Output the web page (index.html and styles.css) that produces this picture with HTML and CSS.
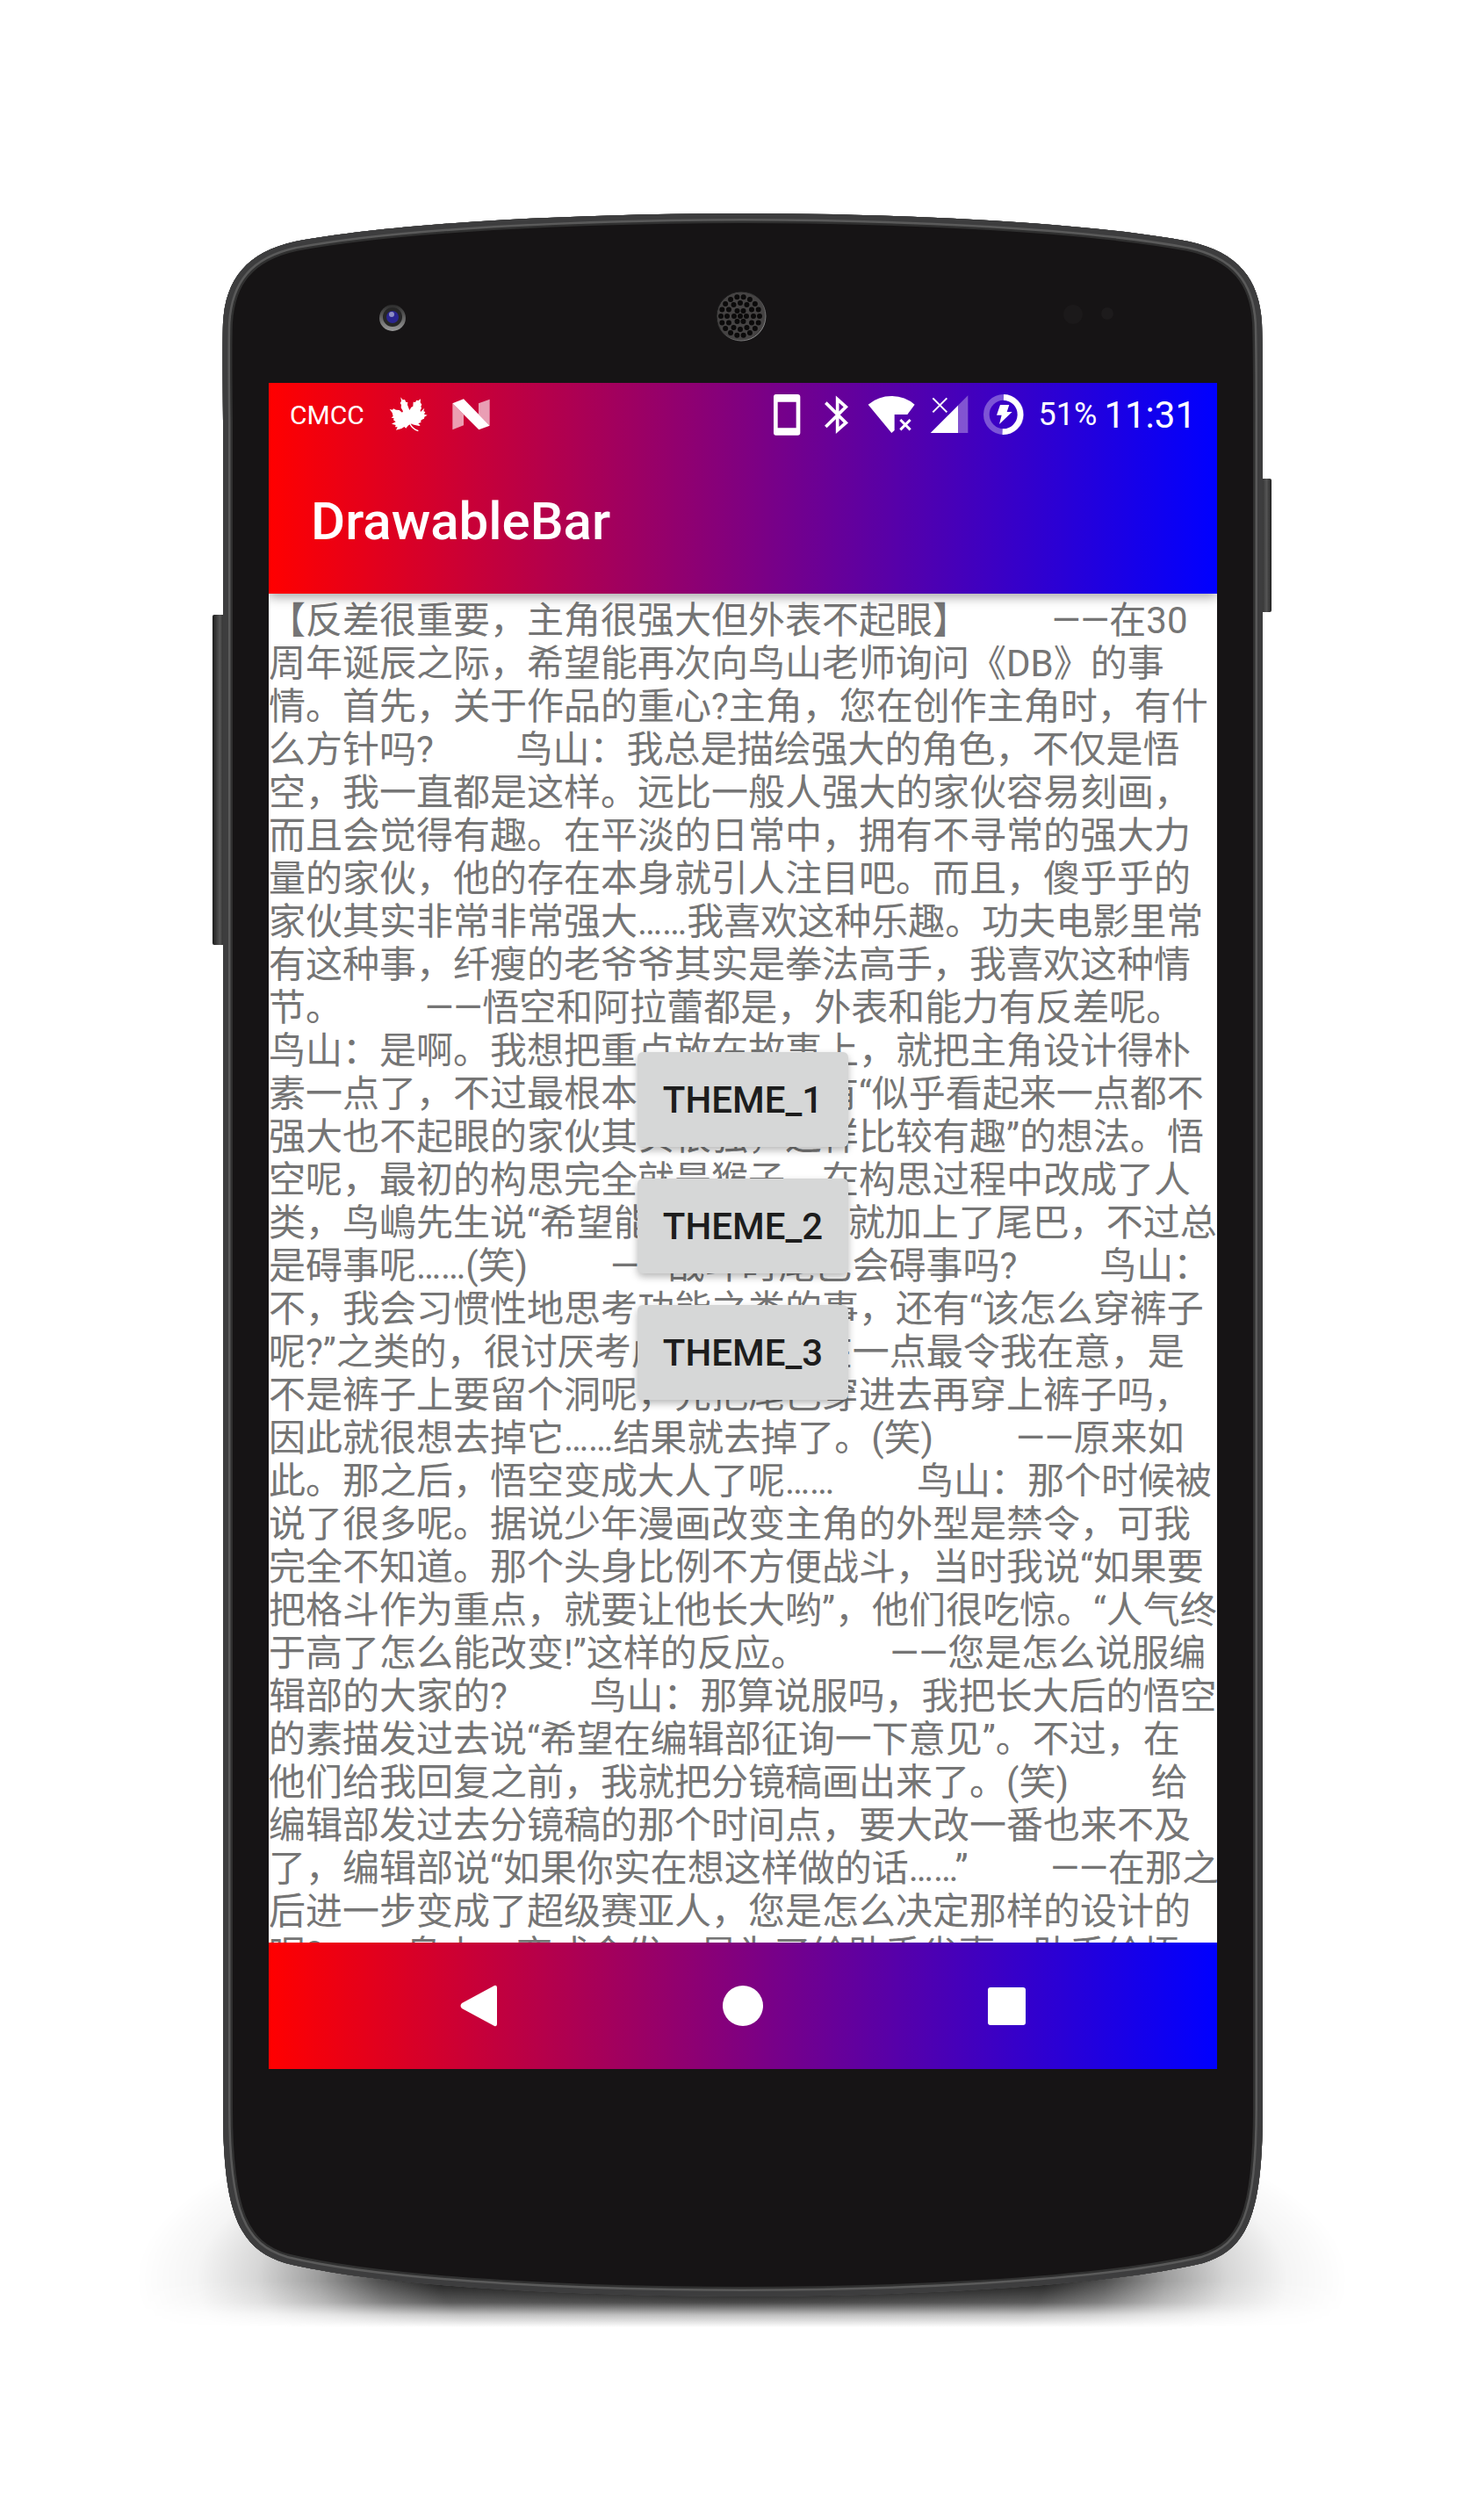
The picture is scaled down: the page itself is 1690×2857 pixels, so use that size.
FILE: index.html
```html
<!DOCTYPE html>
<html lang="zh-CN">
<head>
<meta charset="utf-8">
<meta name="viewport" content="width=device-width, initial-scale=1">
<title>DrawableBar</title>
<link rel="stylesheet" href="styles.css">
</head>
<body>
<main class="stage">
  <div class="device">
    <svg class="shell" viewBox="252 242 1186 2374" preserveAspectRatio="none" aria-hidden="true">
      <defs>
        <radialGradient id="glow">
          <stop offset="0" stop-color="#000"/>
          <stop offset=".5" stop-color="#000" stop-opacity=".88"/>
          <stop offset=".6" stop-color="#000" stop-opacity=".68"/>
          <stop offset=".7" stop-color="#000" stop-opacity=".38"/>
          <stop offset=".8" stop-color="#000" stop-opacity=".16"/>
          <stop offset=".9" stop-color="#000" stop-opacity=".04"/>
          <stop offset="1" stop-color="#000" stop-opacity="0"/>
        </radialGradient>
        <linearGradient id="fade" x1="0" y1="2300" x2="0" y2="2650" gradientUnits="userSpaceOnUse">
          <stop offset="0" stop-color="#fff"/>
          <stop offset=".85" stop-color="#fff"/>
          <stop offset=".92" stop-color="#bbb"/>
          <stop offset=".96" stop-color="#444"/>
          <stop offset="1" stop-color="#000"/>
        </linearGradient>
        <mask id="ground" maskUnits="userSpaceOnUse" x="100" y="2250" width="1500" height="400">
          <rect x="100" y="2250" width="1500" height="400" fill="url(#fade)"/>
        </mask>
        <linearGradient id="key">
          <stop offset="0" stop-color="#1c1c1c"/>
          <stop offset=".6" stop-color="#555"/>
          <stop offset="1" stop-color="#222"/>
        </linearGradient>
        <linearGradient id="lens" x1="0" y1="0" x2="0" y2="1">
          <stop offset="0" stop-color="#2b2b2b"/>
          <stop offset="1" stop-color="#9a9a9a"/>
        </linearGradient>
        <linearGradient id="rim" x1="0" y1="0" x2="1" y2="1">
          <stop offset=".3" stop-color="#1a1a1a"/>
          <stop offset="1" stop-color="#aaa"/>
        </linearGradient>
        <path id="body" d="M845 243C1000 243 1225 251 1354 275C1410 287 1434 318 1437 367Q1438 390 1438 480V2400C1438 2520 1422 2561 1370 2577C1240 2607 1000 2615 845 2615C690 2615 450 2607 325 2577C272 2561 254 2520 254 2400V480Q253 390 254 367C257 318 281 287 336 275C465 251 690 243 845 243Z"/>
        <clipPath id="bodyClip"><use href="#body"/></clipPath>
      </defs>
      <ellipse cx="845" cy="2595" rx="690" ry="230" fill="url(#glow)" mask="url(#ground)"/>
      <rect x="242" y="700" width="14" height="376" rx="2" fill="url(#key)"/>
      <rect x="1434" y="545" width="14" height="152" rx="2" fill="url(#key)"/>
      <use href="#body" fill="#161415"/>
      <g clip-path="url(#bodyClip)" fill="none">
        <use href="#body" stroke="#303030" stroke-width="22"/>
        <use href="#body" stroke="#5a5a5a" stroke-width="17"/>
        <use href="#body" stroke="#3d3d3e" stroke-width="12"/>
      </g>
      <circle cx="447" cy="362" r="15" fill="url(#lens)"/>
      <circle cx="447" cy="361" r="11" fill="#262626"/>
      <circle cx="447" cy="361" r="7" fill="#2a2590"/>
      <circle cx="446" cy="358" r="3" fill="#8e8ec4"/>
      <circle cx="844" cy="360" r="28" fill="#454343" stroke="url(#rim)" stroke-width="1"/>
      <g fill="none" stroke="#0b0a0a" stroke-width="6" stroke-linecap="round">
        <path d="M843 360h0"/>
        <circle cx="843" cy="360" r="7" pathLength="6" stroke-dasharray="0 1"/>
        <circle cx="843" cy="360" r="15" pathLength="12" stroke-dasharray="0 1"/>
        <circle cx="843" cy="360" r="22" pathLength="18" stroke-dasharray="0 1"/>
      </g>
      <circle cx="1222" cy="358" r="11" fill="#1b191a"/>
      <circle cx="1261" cy="357" r="7" fill="#1d1b1c"/>
    </svg>

    <section class="screen">
      <header class="top">
        <div class="status">
          <div class="status-left">
            <span class="carrier">CMCC</span>
            <svg width="44" height="40" viewBox="51 395 132 120" aria-hidden="true"><path fill="#fff" d="M91 396L98 405L105 404L109 413L115 413L114 422L121 440L127 430L133 427L134 412L141 413L145 406L151 408L159 402L158 414L163 421L160 427L162 433L158 441L159 446L172 433L169 444L175 446L171 454L182 457L172 463L171 469L164 472L159 477L161 481L151 486L158 492L154 494L140 491L124 487L116 493L109 502L103 497L94 503L75 508L80 498L72 498L74 491L60 487L74 480L66 474L68 468L59 466L65 461L62 449L53 437L63 439L66 435L75 439L86 440L96 448L99 444L92 432L93 422L89 416L93 409Z"/><path d="M122 486q9 18 29 25" fill="none" stroke="#fff" stroke-width="4"/><path d="M128 486q9 13 24 19" fill="none" stroke="#d40028" stroke-width="2"/></svg>
            <svg width="43" height="36" viewBox="269 402 129 108" aria-hidden="true"><path fill="#fff" fill-opacity=".62" d="M270 418l38 38v37l-38 15zM359 418l38-14v90l-38-38z"/><path fill="#fff" d="M270 418l38-15 89 91-37 14z"/></svg>
          </div>
          <div class="status-right">
            <svg width="46" height="48" viewBox="10 24 138 144" aria-hidden="true"><path fill="#fff" fill-rule="evenodd" d="M42 27h74q9 0 9 9v122q0 9-9 9H42q-8 0-8-9V36q0-9 8-9zm6 26v89h63V53z"/></svg>
            <svg width="36" height="48" viewBox="196 24 108 144" aria-hidden="true"><path fill="none" stroke="#fff" stroke-width="11" d="M212 56l69 68-29 26V44l29 26-69 68"/></svg>
            <svg width="56" height="48" viewBox="352 24 168 144" aria-hidden="true"><path fill="#fff" d="M357 62q35-29 80-29t79 29l-25 34h-44v54l-10 9z"/><path fill="none" stroke="#fff" stroke-width="9" d="M467 114l34 34M501 114l-34 34"/></svg>
            <svg width="44" height="48" viewBox="566 24 132 144" aria-hidden="true"><path fill="#fff" fill-opacity=".33" d="M696 31v128h-35V66z"/><path fill="#fff" d="M662 65v94h-94z"/><path fill="none" stroke="#fff" stroke-width="6" d="M576 40l48 48M624 40l-48 48"/></svg>
            <svg width="48" height="48" viewBox="744 24 144 144" aria-hidden="true"><circle cx="816" cy="96" r="59" fill="none" stroke="#fff" stroke-opacity=".33" stroke-width="20"/><path fill="none" stroke="#fff" stroke-width="20" d="M816 37a59 59 0 1 1-4 118"/><path fill="#fff" d="M804 63h31l-8 24h18l-44 42 8-31h-17z"/></svg>
            <div class="readout"><span class="percent">51%</span><span class="clock">11:31</span></div>
          </div>
        </div>
        <h1 class="title">DrawableBar</h1>
      </header>

      <article class="article">【反差很重要，主角很强大但外表不起眼】         ——在30
周年诞辰之际，希望能再次向鸟山老师询问《DB》的事
情。首先，关于作品的重心?主角，您在创作主角时，有什
么方针吗?         鸟山：我总是描绘强大的角色，不仅是悟
空，我一直都是这样。远比一般人强大的家伙容易刻画，
而且会觉得有趣。在平淡的日常中，拥有不寻常的强大力
量的家伙，他的存在本身就引人注目吧。而且，傻乎乎的
家伙其实非常非常强大……我喜欢这种乐趣。功夫电影里常
有这种事，纤瘦的老爷爷其实是拳法高手，我喜欢这种情
节。         ——悟空和阿拉蕾都是，外表和能力有反差呢。
鸟山：是啊。我想把重点放在故事上，就把主角设计得朴
素一点了，不过最根本的还是因为有“似乎看起来一点都不
强大也不起眼的家伙其实很强，这样比较有趣”的想法。悟
空呢，最初的构思完全就是猴子，在构思过程中改成了人
类，鸟嶋先生说“希望能有些特征”，就加上了尾巴，不过总
是碍事呢……(笑)         ——战斗时尾巴会碍事吗?         鸟山：
不，我会习惯性地思考功能之类的事，还有“该怎么穿裤子
呢?”之类的，很讨厌考虑。特别是在一点最令我在意，是
不是裤子上要留个洞呢，先把尾巴穿进去再穿上裤子吗，
因此就很想去掉它……结果就去掉了。(笑)         ——原来如
此。那之后，悟空变成大人了呢……         鸟山：那个时候被
说了很多呢。据说少年漫画改变主角的外型是禁令，可我
完全不知道。那个头身比例不方便战斗，当时我说“如果要
把格斗作为重点，就要让他长大哟”，他们很吃惊。“人气终
于高了怎么能改变!”这样的反应。         ——您是怎么说服编
辑部的大家的?         鸟山：那算说服吗，我把长大后的悟空
的素描发过去说“希望在编辑部征询一下意见”。不过，在
他们给我回复之前，我就把分镜稿画出来了。(笑)         给
编辑部发过去分镜稿的那个时间点，要大改一番也来不及
了，编辑部说“如果你实在想这样做的话……”         ——在那之
后进一步变成了超级赛亚人，您是怎么决定那样的设计的
呢?         鸟山：变成金发，是为了给助手省事，助手给悟</article>

      <nav class="navbar" aria-label="System">
        <button class="nav-key" type="button" aria-label="Back"><svg width="48" height="48" viewBox="0 0 48 48"><path fill="#fff" d="M41 1q3-1 3 3v40q0 4-3 3L4 27q-3-3 0-6z"/></svg></button>
        <button class="nav-key" type="button" aria-label="Home"><svg width="48" height="48" viewBox="0 0 48 48"><circle cx="24" cy="24" r="23" fill="#fff"/></svg></button>
        <button class="nav-key" type="button" aria-label="Overview"><svg width="48" height="48" viewBox="0 0 48 48"><rect x="3" y="3" width="43" height="43" rx="3" fill="#fff"/></svg></button>
      </nav>

      <div class="themes">
        <button class="theme" type="button">THEME_1</button>
        <button class="theme" type="button">THEME_2</button>
        <button class="theme" type="button">THEME_3</button>
      </div>
    </section>
  </div>
</main>
</body>
</html>
```
FILE: styles.css
```css
* {
  box-sizing: border-box;
}

body {
  margin: 0;
  background: #fff;
  font-family: Roboto, "Noto Sans CJK SC", sans-serif;
}

.stage {
  padding: 242px 16px;
  overflow: hidden;
}

.device {
  position: relative;
  max-width: 1186px;
  margin: 0 auto;
  padding: 194px 52px 260px 54px;
}

.shell {
  position: absolute;
  inset: 0;
  width: 100%;
  height: 100%;
  overflow: visible;
}

.screen {
  position: relative;
  display: flex;
  flex-direction: column;
  aspect-ratio: 9 / 16;
  overflow: hidden;
  background: #fff;
}

.top,
.navbar {
  flex: none;
  background: linear-gradient(90deg, #f00, #800080, #00f);
  color: #fff;
}

.top {
  position: relative;
  z-index: 1;
  box-shadow: 0 4px 12px rgba(0, 0, 0, 0.35);
}

.status,
.status-left,
.status-right,
.readout {
  display: flex;
  align-items: center;
}

.status {
  justify-content: space-between;
  height: 72px;
  padding: 0 24px;
}

.status-left {
  gap: 28px;
}

.status-right {
  gap: 16px;
}

.readout {
  gap: 8px;
}

.carrier {
  font-size: 30px;
}

.percent {
  font-size: 36px;
}

.clock {
  font-size: 42px;
}

.title {
  margin: 0;
  padding: 4px 48px 0;
  font-size: 60px;
  font-weight: 500;
  line-height: 164px;
}

.article {
  flex: 1;
  min-height: 0;
  padding-top: 6px;
  overflow: hidden;
  color: #757575;
  font-size: 42px;
  line-height: 49px;
  white-space: pre;
}

.navbar {
  display: flex;
  justify-content: center;
  height: 144px;
}

.nav-key {
  display: grid;
  flex: 0 1 300px;
  place-items: center;
  padding: 0;
  border: 0;
  background: none;
}

.themes {
  position: absolute;
  inset: 0;
  display: grid;
  gap: 36px;
  place-content: center;
}

.theme {
  width: 240px;
  height: 108px;
  padding: 0;
  border: 0;
  border-radius: 6px;
  background: #d6d7d7;
  box-shadow: 0 4px 8px rgba(0, 0, 0, 0.28);
  color: #1d1d1d;
  font-family: inherit;
  font-size: 42px;
  font-weight: 500;
}
```
